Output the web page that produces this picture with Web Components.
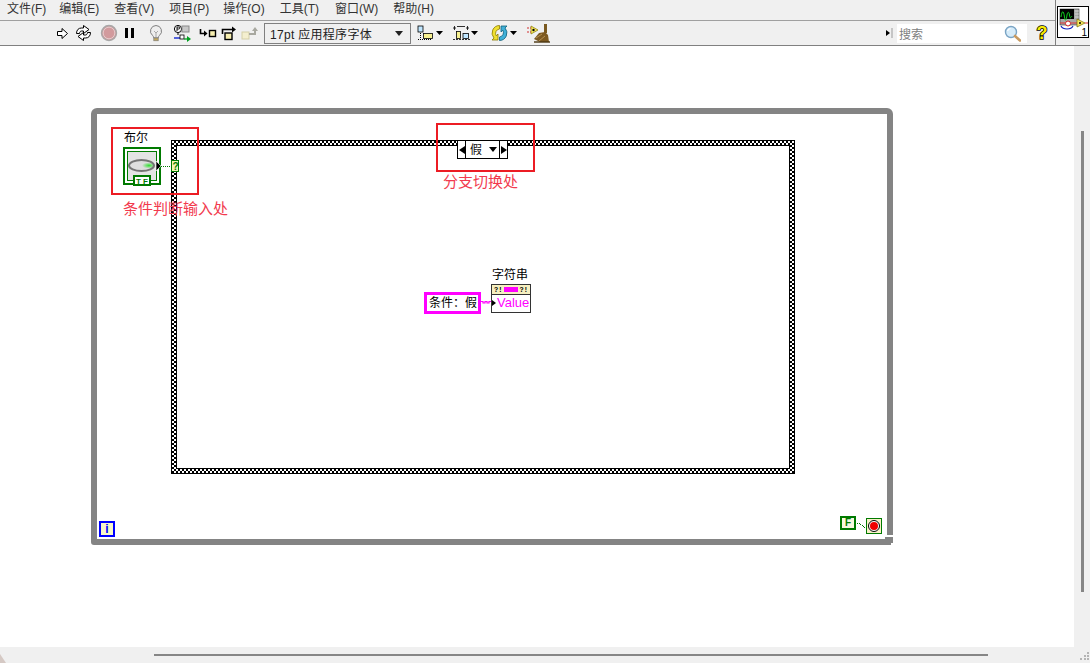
<!DOCTYPE html>
<html lang="zh">
<head>
<meta charset="utf-8">
<title>While Loop</title>
<style>
  html, body { margin: 0; height: 100%; overflow: hidden; background: #f0f0f0; }
</style>
</head>
<body>
<lv-window>
  <lv-menubar slot="menu">
    <span>文件(F)</span><span>编辑(E)</span><span>查看(V)</span><span>项目(P)</span><span>操作(O)</span><span>工具(T)</span><span>窗口(W)</span><span>帮助(H)</span>
  </lv-menubar>
  <lv-toolbar slot="tools"></lv-toolbar>
  <lv-vi-icon slot="icon"></lv-vi-icon>
  <lv-canvas slot="canvas">
    <lv-loop style="left:91px;top:62px;width:802px;height:437px"></lv-loop>
    <lv-case style="left:171px;top:94px;width:624px;height:334px" value="假"></lv-case>
    <lv-bool style="left:123px;top:84px" label="布尔"></lv-bool>
    <lv-string-const style="left:424px;top:246px">条件：假</lv-string-const>
    <lv-string-ind style="left:482px;top:222px" label="字符串"></lv-string-ind>
    <lv-loop-index style="left:99px;top:475px"></lv-loop-index>
    <lv-stop style="left:840px;top:470px"></lv-stop>
    <lv-callout style="left:111px;top:81px;width:88px;height:68px" note="条件判断输入处" dx="10" dy="6"></lv-callout>
    <lv-callout style="left:436px;top:77px;width:99px;height:49px" note="分支切换处" dx="5" dy="2"></lv-callout>
  </lv-canvas>
</lv-window>

<script>
const CJK = `"Liberation Sans", "Noto Sans CJK SC", sans-serif`;

// small helper, every element here is just a style block + some markup
class Base extends HTMLElement {
  constructor() {
    super();
    this.attachShadow({ mode: "open" });
  }
  connectedCallback() {
    this.shadowRoot.innerHTML = `<style>${this.constructor.styles}</style>${this.markup()}`;
  }
  markup() { return "<slot></slot>"; }
}

class LvWindow extends Base {
  static styles = /* css */`
    :host {
      display: grid;
      grid-template-columns: 1fr 35px;
      grid-template-rows: 46px 1fr;
      width: 1090px;
      height: 663px;
      background: #f0f0f0;
      font-family: ${CJK};
    }
    .bars { display: flex; flex-direction: column; border-bottom: 1px solid #808080; border-right: 0; min-width: 0; }
    .side { border-left: 1px solid #808080; border-bottom: 1px solid #808080; display: flex; padding: 6px 0 0 1px; }
    .work {
      grid-column: 1 / 3;
      position: relative;
      display: grid;
      grid-template-columns: 1fr 16px;
      grid-template-rows: 1fr 16px;
    }
    .vbar { position: relative; display: flex; justify-content: center; padding: 85px 0 55px; }
    .vbar i { display: block; width: 3px; height: 100%; background: #868686; margin-left: 1px; }
    .hbar { display: flex; padding: 7px 0 0 154px; }
    .hbar i { display: block; width: 834px; height: 2px; background: #868686; }
    .grip { display: block; overflow: visible; }
    .nick { position: absolute; left: 0; bottom: 0; }
  `;
  markup() {
    return /* html */`
      <div class="bars">
        <slot name="menu"></slot>
        <slot name="tools"></slot>
      </div>
      <div class="side"><slot name="icon"></slot></div>
      <div class="work">
        <slot name="canvas"></slot>
        <div class="vbar"><i></i></div>
        <div class="hbar"><i></i></div>
        <svg class="grip" width="16" height="16" viewBox="0 0 16 16">
          <g fill="#b4b4b4">
            <rect x="13" y="5" width="2" height="2"/>
            <rect x="10" y="8" width="2" height="2"/><rect x="13" y="8" width="2" height="2"/>
            <rect x="6" y="11" width="2" height="2"/><rect x="10" y="11" width="2" height="2"/><rect x="13" y="11" width="2" height="2"/>
          </g>
        </svg>
        <svg class="nick" width="8" height="10" viewBox="0 0 8 10"><path d="M0 1l6 9H0z" fill="#c9b8b0" opacity=".7"/></svg>
      </div>
    `;
  }
}

class LvMenubar extends Base {
  static styles = /* css */`
    :host {
      display: block;
      height: 20px;
      border-bottom: 1px solid #a0a0a0;
      box-sizing: content-box;
    }
    div {
      display: flex;
      gap: 15px;
      padding: 1px 0 0 7px;
      font-size: 12px;
      line-height: 17px;
      color: #333;
      white-space: nowrap;
    }
    ::slotted(span:first-child) { margin-right: -2px; }
    ::slotted(span:nth-child(5)), ::slotted(span:nth-child(6)) { position: relative; left: -1px; }
  `;
  markup() { return `<div><slot></slot></div>`; }
}

const ICONS = {
  run: `<path d="M1.500 4.500h4.500V1.500l5.500 5-5.500 5V8.500H1.500z" fill="#fff" stroke="#000"/>`,
  cont: `<g fill="#fff" stroke="#000"><path d="M1.500 9.500c0-3.500 2-5.500 5-5.500h2V1.500l5.500 4-5.500 4V7H6.500c-1 0-2 1-2 2.500z"/><path d="M15.500 8.500c0 3.500-2 5.500-5 5.500h-2v2.500L3 12.500l5.500-4V11h2c1 0 2-1 2-2.500z"/></g>`,
  abort: `<circle cx="9" cy="9" r="7.500" fill="#d29a9d" stroke="#a8a8a8" stroke-width="1.400"/><circle cx="9" cy="9" r="5.800" fill="none" stroke="#e8d8d8" stroke-width=".8"/>`,
  pause: `<rect x="1" y="3" width="3" height="10" fill="#000"/><rect x="7" y="3" width="3" height="10" fill="#000"/>`,
  bulb: `<path d="M8 1.500a5.600 5.600 0 0 0-3.400 10c.8.700 1 1.400 1 2.300h4.800c0-.9.200-1.600 1-2.300A5.600 5.600 0 0 0 8 1.500z" fill="#eee" stroke="#808080"/><path d="M6 7l2 2 2-2M8 9v4.500" fill="none" stroke="#a8a8a8"/><rect x="5.800" y="14" width="4.400" height="2.800" fill="#c2a860" stroke="#777" stroke-width=".6"/>`,
  retain: `<circle cx="5" cy="5" r="3.600" fill="#fff" stroke="#000"/><path d="M4 7V3h1.800a1 1 0 0 1 0 2H4" fill="none" stroke="#000" stroke-width=".9"/><path d="M5 9v2" stroke="#000"/><rect x="9" y="2" width="7" height="6" fill="#c8c8c8" stroke="#8a8a8a"/><path d="M1 14h10" stroke="#0018d0" stroke-width="1.300"/><rect x="7" y="11" width="4" height="4" fill="#fff" stroke="#000" stroke-width=".8"/><path d="M11 15h4" stroke="#00a020" stroke-width="1.300"/><path d="M14 12l4 3-4 3z" fill="#00a020"/>`,
  into: `<path d="M1.500 5v4.500h4" fill="none" stroke="#000" stroke-width="1.600"/><path d="M5 6.500l3.500 3-3.500 3z" fill="#000"/><rect x="10.500" y="6.500" width="6" height="6" fill="#f6eeb0" stroke="#000" stroke-width="1.400"/>`,
  over: `<path d="M1.500 8V3.500h10" fill="none" stroke="#000" stroke-width="1.600"/><path d="M11 .5l4 3-4 3z" fill="#000"/><rect x="4" y="7" width="7" height="6.500" fill="#f6eeb0" stroke="#000" stroke-width="1.400"/>`,
  out: `<rect x="1" y="8" width="7" height="7" fill="#f4efcf" stroke="#d4cfa8"/><path d="M8 10h6V6" fill="none" stroke="#a8a8a0" stroke-width="2"/><path d="M11 7l3-4 3 4z" fill="#a8a8a0"/>`,
  align: `<rect x="1" y="1" width="5" height="6" fill="#bfe6ff" stroke="#000" stroke-width=".8"/><path d="M3.500 8v5" stroke="#000" stroke-dasharray="1 1"/><path d="M1 14.500h14" stroke="#000" stroke-dasharray="1 1"/><rect x="6.500" y="8.500" width="9" height="5" fill="#f6f090" stroke="#000" stroke-width=".8"/><path d="M19 6h7l-3.500 4z" fill="#000"/>`,
  dist: `<path d="M0 3h3M4 1.500h8M13 3h3M1.500 1v4M14.500 1v4" stroke="#000" stroke-width=".8" fill="none"/><rect x="3.500" y="6.500" width="4" height="7" fill="#f6f090" stroke="#000" stroke-width=".8"/><rect x="10" y="8.500" width="5.500" height="5" fill="#bfe6ff" stroke="#000" stroke-width=".8"/><path d="M0 14.500h17" stroke="#000" stroke-width=".8" stroke-dasharray="2 1"/><path d="M18 6h7l-3.500 4z" fill="#000"/>`,
  reorder: `<path d="M8.500 1.500a7.500 7.500 0 0 0-5.500 12.500l-2 2h6v-6L5.200 11.800A4.500 4.500 0 0 1 8.500 5z" fill="#f0e030" stroke="#8a7a00" stroke-width=".8"/><path d="M8.500 16.500a7.500 7.500 0 0 0 5.500-12.500l2-2h-6v6l1.800-1.800A4.500 4.500 0 0 1 8.500 13z" fill="#40b0d8" stroke="#10607a" stroke-width=".8"/><path d="M19 7h7l-3.500 4z" fill="#000"/>`,
  clean: `<path d="M4 3l7 4-7 4z" fill="#f6e860" stroke="#8a7a00" stroke-width=".7"/><circle cx="6.500" cy="7" r="1.200" fill="#000"/><path d="M0 5h4M0 9h4" stroke="#d03030" stroke-dasharray="2 1"/><path d="M18.500 1v9" stroke="#7a5a20" stroke-width="3"/><path d="M7 16l5-6 6-1 3 3 1 7-9 0z" fill="#7d5a22"/><path d="M9 15l6-4M12 18l6-5" stroke="#c8a060" stroke-width=".8"/><path d="M7 19h16" stroke="#4a3510" stroke-width="1.400"/>`,
  mini: `<path d="M1 2l4 3-4 3z" fill="#000"/><path d="M7 0v10" stroke="#9a9a9a"/>`,
  lens: `<circle cx="7" cy="7" r="5.500" fill="#d6ecfa" stroke="#7aa4c4" stroke-width="1.400"/><path d="M3.500 6a4 4 0 0 1 3-2.500" stroke="#fff" fill="none" stroke-width="1.200"/><path d="M11 11l5 4.500" stroke="#c89a60" stroke-width="2.600" stroke-linecap="round"/>`,
};

class LvToolbar extends Base {
  static styles = /* css */`
    :host { display: block; height: 24px; }
    .row { display: flex; align-items: center; height: 24px; padding-left: 56px; }
    svg { display: block; flex: none; }
    .font {
      flex: none;
      box-sizing: border-box;
      width: 147px;
      height: 21px;
      margin-left: 5px;
      border: 1px solid #808080;
      display: flex;
      align-items: center;
      padding: 0 5px;
      font-size: 12px;
      color: #222;
      letter-spacing: .3px;
    }
    .font b { margin-left: auto; width: 0; height: 0; border: 4px solid transparent; border-top: 5px solid #222; border-bottom: 0; margin-right: 2px; }
    .search {
      flex: none;
      box-sizing: border-box;
      width: 130px;
      height: 19px;
      margin-left: 4px;
      background: #fff;
      display: flex;
      align-items: center;
      justify-content: space-between;
      padding: 0 6px 0 2px;
      font-size: 12px;
      color: #808080;
    }
    .help {
      flex: none;
      margin-left: 9px;
      width: 12px;
      font: bold 18px "Liberation Sans", sans-serif;
      color: #f8ec00;
      -webkit-text-stroke: 1.600px #000;
      paint-order: stroke fill;
      line-height: 18px;
      text-align: center;
    }
  `;
  icon(name, w, ml, h = 18) {
    return `<svg width="${w}" height="${h}" viewBox="0 0 ${w} ${h}" style="margin-left:${ml}px">${ICONS[name]}</svg>`;
  }
  markup() {
    return /* html */`
      <div class="row">
        ${this.icon("run", 13, 0, 13)}
        ${this.icon("cont", 17, 6)}
        ${this.icon("abort", 18, 8)}
        ${this.icon("pause", 11, 6, 16)}
        ${this.icon("bulb", 16, 13)}
        ${this.icon("retain", 18, 9)}
        ${this.icon("into", 18, 8)}
        ${this.icon("over", 16, 4, 15)}
        ${this.icon("out", 18, 4)}
        <div class="font"><span>17pt 应用程序字体</span><b></b></div>
        ${this.icon("align", 26, 6, 16)}
        ${this.icon("dist", 26, 10, 16)}
        ${this.icon("reorder", 27, 12)}
        ${this.icon("clean", 24, 9, 20)}
        ${this.icon("mini", 8, 334, 10)}
        <div class="search"><span>搜索</span><svg width="17" height="17" viewBox="0 0 17 17">${ICONS.lens}</svg></div>
        <div class="help">?</div>
      </div>
    `;
  }
}

class LvViIcon extends Base {
  static styles = /* css */`
    :host { display: block; width: 32px; height: 32px; }
    svg { display: block; }
    text { font: 10px "Liberation Sans", sans-serif; }
  `;
  markup() {
    return /* html */`
      <svg width="32" height="32" viewBox="0 0 32 32">
        <rect x=".5" y=".5" width="31" height="31" fill="#fff" stroke="#000"/>
        <rect x="3" y="3" width="19" height="16" fill="#a8a8a8" stroke="#333" stroke-width=".6"/>
        <rect x="3" y="3" width="14" height="10" fill="#000"/>
        <path d="M4 11c1-7 2.500-7 3.500 0s2 1 2.500-2 2-4 2.500 0 1 3 2.500 1" fill="none" stroke="#10d020"/>
        <path d="M18.500 5h3M18.500 8h3M18.500 11h3" stroke="#fff" stroke-dasharray="1 1"/>
        <path d="M3 17h5M14 17h7" stroke="#e03030"/>
        <circle cx="11" cy="17.500" r="2.500" fill="#fff" stroke="#d02020"/>
        <path d="M4 20c2 4 10 4 12 0" fill="none" stroke="#1020c0" stroke-width="1.200"/>
        <path d="M20 13l8 4-8 4z" fill="#f6e860" stroke="#7a6a00" stroke-width=".7"/>
        <circle cx="23" cy="17" r="1" fill="#000"/>
        <path d="M28 17h3" stroke="#e03030"/>
        <text x="24.500" y="30">1</text>
      </svg>
    `;
  }
}

class LvCanvas extends Base {
  static styles = /* css */`
    :host { display: block; position: relative; background: #fff; overflow: hidden; font-family: ${CJK}; }
  `;
}

// the diagram pieces sit on a free canvas, so absolute is right here
class LvLoop extends Base {
  static styles = /* css */`
    :host { display: block; position: absolute; box-sizing: border-box; }
    .frame { position: absolute; inset: 0; border: 6px solid #848484; border-radius: 6px 6px 0 3px; }
    .gap { position: absolute; right: 0; bottom: 8px; width: 6px; height: 2px; background: #fff; }
    .nib { position: absolute; right: 0; bottom: 0; width: 2px; height: 2px; background: #fff; }
    .tab { position: absolute; right: 6px; bottom: 6px; width: 2px; height: 2px; background: #848484; }
  `;
  markup() { return `<div class="frame"></div><div class="gap"></div><div class="nib"></div><div class="tab"></div>`; }
}

class LvCase extends Base {
  static styles = /* css */`
    :host {
      display: block;
      position: absolute;
      box-sizing: border-box;
      border: 1px solid #000;
      padding: 5px;
      background: #fff conic-gradient(#000 25%, #fff 0 50%, #000 0 75%, #fff 0) 0 0 / 4px 4px;
    }
    .inner { width: 100%; height: 100%; background: #fff; outline: 1px solid #000; }
    .sel {
      position: absolute;
      left: 285px;
      top: -1px;
      box-sizing: border-box;
      width: 51px;
      height: 19px;
      display: grid;
      grid-template-columns: 8px 1fr 8px;
      border: 1px solid #000;
      background: #fff;
      font-size: 12px;
      line-height: 14px;
      color: #111;
    }
    .sel > div { display: flex; align-items: center; justify-content: center; }
    .btn { background: #fff; }
    .btn:first-child { border-right: 1px solid #000; }
    .btn:last-child { border-left: 1px solid #000; }
    .mid { justify-content: space-between !important; padding: 0 2px 0 4px; }
    .l { border: 4px solid transparent; border-left: 0; border-right: 6px solid #000; }
    .r { border: 4px solid transparent; border-right: 0; border-left: 6px solid #000; }
    .d { border: 4px solid transparent; border-bottom: 0; border-top: 5px solid #000; }
  `;
  markup() {
    return /* html */`
      <div class="inner"></div>
      <div class="sel">
        <div class="btn"><span class="l"></span></div>
        <div class="mid"><span>${this.getAttribute("value")}</span><span class="d"></span></div>
        <div class="btn"><span class="r"></span></div>
      </div>
    `;
  }
}

class LvBool extends Base {
  static styles = /* css */`
    :host { display: block; position: absolute; font-size: 12px; color: #000; }
    .label { position: absolute; left: 1px; top: 1px; white-space: nowrap; line-height: 14px; }
    svg { position: absolute; left: 0; top: 17px; overflow: visible; }
    text { font: bold 8px "Liberation Sans", sans-serif; fill: #007a00; letter-spacing: 2px; }
  `;
  markup() {
    return /* html */`
      <span class="label">${this.getAttribute("label")}</span>
      <svg width="56" height="38" viewBox="0 0 56 38">
        <defs>
          <radialGradient id="led" cx=".8" cy=".5" r=".28"><stop offset="0" stop-color="#30e030"/><stop offset="1" stop-color="#dedede"/></radialGradient>
        </defs>
        <rect x="1" y="1" width="36" height="36" fill="#fff" stroke="#007a00" stroke-width="2"/>
        <rect x="3.500" y="3.500" width="31" height="31" fill="#e4e4e4" stroke="#fff" stroke-width="1"/>
        <rect x="4.500" y="4.500" width="29" height="29" fill="#e4e4e4" stroke="#007a00" stroke-width="1"/>
        <ellipse cx="18.500" cy="18.500" rx="12.500" ry="5.500" fill="url(#led)" stroke="#757575" stroke-width="2"/>
        <rect x="11" y="29" width="16" height="9" fill="#fff" stroke="#007a00" stroke-width="2"/>
        <text x="13" y="36.500">TF</text>
        <path d="M33 14l5 5-5 5z" fill="#000" stroke="#fff" stroke-width=".6"/>
        <path d="M38 19.500h10" stroke="#007a00" stroke-dasharray="1 1"/>
        <rect x="48.500" y="13.500" width="7" height="11" fill="#f6f6b4" stroke="#007a00"/>
        <text x="49.500" y="23" style="letter-spacing:0;font-size:10px">?</text>
      </svg>
    `;
  }
}

class LvStringConst extends Base {
  static styles = /* css */`
    :host {
      display: block;
      position: absolute;
      box-sizing: border-box;
      width: 57px;
      height: 22px;
      border: 3px solid #ff00ff;
      background: #fff;
      padding-left: 2px;
      font-size: 12px;
      line-height: 16px;
      color: #000;
      white-space: nowrap;
    }
  `;
}

class LvStringInd extends Base {
  static styles = /* css */`
    :host { display: block; position: absolute; width: 50px; height: 46px; }
    .label { position: absolute; left: 10px; top: 0; font-size: 12px; line-height: 14px; white-space: nowrap; color: #000; }
    .wire { position: absolute; left: -1px; top: 31px; overflow: visible; }
    .box {
      position: absolute;
      left: 9px;
      top: 16px;
      box-sizing: border-box;
      width: 40px;
      height: 29px;
      border: 1px solid #333;
      background: #fff;
    }
    .top {
      height: 9px;
      background: #f6f0c0;
      border-bottom: 1px solid #333;
      display: flex;
      align-items: center;
      justify-content: space-between;
      padding: 0 2px;
      font: bold 7px/8px "Liberation Mono", monospace;
      color: #000;
    }
    .top i { display: block; width: 14px; height: 5px; background: #ff00ff; }
    .val { display: flex; align-items: center; height: 16px; font: 13px/16px "Liberation Sans", sans-serif; color: #ff00ff; }
    .val b { width: 0; height: 0; border: 3.500px solid transparent; border-right: 0; border-left: 4px solid #000; margin-right: 1px; }
  `;
  markup() {
    return /* html */`
      <span class="label">${this.getAttribute("label")}</span>
      <svg class="wire" width="11" height="6" viewBox="0 0 11 6"><path d="M0 2.500h2v1.500h2V2.500h2V4h2V2.500h3" fill="none" stroke="#ff00ff" stroke-width="1.200"/></svg>
      <div class="box">
        <div class="top"><span>?!</span><i></i><span>?!</span></div>
        <div class="val"><b></b><span>Value</span></div>
      </div>
    `;
  }
}

class LvLoopIndex extends Base {
  static styles = /* css */`
    :host {
      display: block;
      position: absolute;
      box-sizing: border-box;
      width: 16px;
      height: 16px;
      border: 2px solid #0000ff;
      background: #f8f8c8;
      font: bold 12px/12px "Liberation Sans", sans-serif;
      color: #0000ff;
      text-align: center;
    }
  `;
  markup() { return "i"; }
}

class LvStop extends Base {
  static styles = /* css */`
    :host { display: block; position: absolute; width: 42px; height: 18px; }
    .f {
      position: absolute; left: 0; top: 0;
      box-sizing: border-box;
      width: 16px; height: 14px;
      border: 2px solid #007a00;
      background: #f8f8e0;
      font: bold 10px/10px "Liberation Sans", sans-serif;
      color: #007a00;
      text-align: center;
    }
    svg { position: absolute; left: 0; top: 0; overflow: visible; }
  `;
  markup() {
    return /* html */`
      <div class="f">F</div>
      <svg width="42" height="18" viewBox="0 0 42 18">
        <path d="M17 7.500h3M20.500 8v1M22 9.500h1M23.500 10v1M24 11.500h2" fill="none" stroke="#007a00" stroke-dasharray="1 1"/>
        <rect x="26.500" y="2.500" width="15" height="15" fill="#f8f0c8" stroke="#007a00"/>
        <circle cx="34" cy="10" r="5.500" fill="#fff" stroke="#000"/>
        <circle cx="34" cy="10" r="4" fill="#f00000"/>
      </svg>
    `;
  }
}

class LvCallout extends Base {
  static styles = /* css */`
    :host { display: block; position: absolute; box-sizing: border-box; border: 2px solid #ec1c24; }
    span {
      position: absolute;
      top: 100%;
      font-size: 15px;
      line-height: 20px;
      white-space: nowrap;
      color: #f23a4e;
    }
  `;
  markup() {
    return `<span style="left:${this.getAttribute("dx")}px;margin-top:${this.getAttribute("dy")}px">${this.getAttribute("note")}</span>`;
  }
}

customElements.define("lv-window", LvWindow);
customElements.define("lv-menubar", LvMenubar);
customElements.define("lv-toolbar", LvToolbar);
customElements.define("lv-vi-icon", LvViIcon);
customElements.define("lv-canvas", LvCanvas);
customElements.define("lv-loop", LvLoop);
customElements.define("lv-case", LvCase);
customElements.define("lv-bool", LvBool);
customElements.define("lv-string-const", LvStringConst);
customElements.define("lv-string-ind", LvStringInd);
customElements.define("lv-loop-index", LvLoopIndex);
customElements.define("lv-stop", LvStop);
customElements.define("lv-callout", LvCallout);
</script>
</body>
</html>
